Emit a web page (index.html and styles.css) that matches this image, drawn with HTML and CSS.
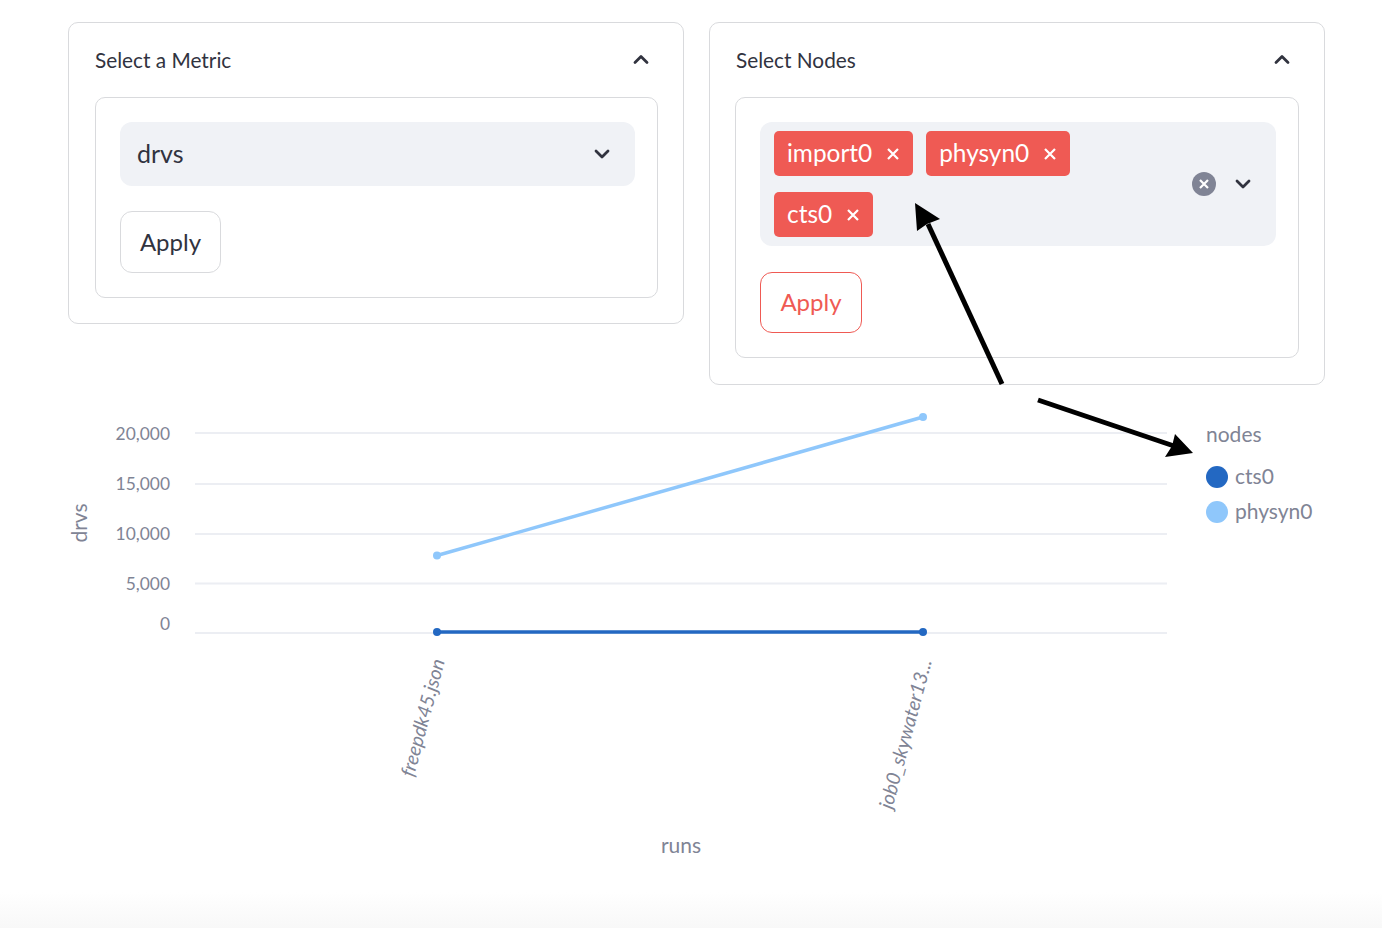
FILE: index.html
```html
<!DOCTYPE html>
<html lang="en">
<head>
<meta charset="utf-8">
<title>Metrics</title>
<link rel="stylesheet" href="styles.css">
</head>
<body>
<main class="page">
  <section class="panels">
    <div class="panel">
      <header class="panel-head">
        <span class="panel-title">Select a Metric</span>
        <svg class="chev" viewBox="0 0 18 18"><path d="M3 12.5 9 6.5l6 6"/></svg>
      </header>
      <div class="form">
        <div class="select">
          <span class="value">drvs</span>
          <svg class="chev" viewBox="0 0 18 18"><path d="M3 6 9 12l6-6"/></svg>
        </div>
        <button class="apply">Apply</button>
      </div>
    </div>
    <div class="panel nodes">
      <header class="panel-head">
        <span class="panel-title">Select Nodes</span>
        <svg class="chev" viewBox="0 0 18 18"><path d="M3 12.5 9 6.5l6 6"/></svg>
      </header>
      <div class="form">
        <div class="select multi">
          <div class="tags">
            <span class="tag">import0<svg class="tag-x" viewBox="0 0 14 14"><path d="M2 2l10 10M12 2 2 12"/></svg></span>
            <span class="tag">physyn0<svg class="tag-x" viewBox="0 0 14 14"><path d="M2 2l10 10M12 2 2 12"/></svg></span>
            <span class="tag">cts0<svg class="tag-x" viewBox="0 0 14 14"><path d="M2 2l10 10M12 2 2 12"/></svg></span>
          </div>
          <svg class="clear" viewBox="0 0 24 24"><circle cx="12" cy="12" r="12"/><path d="M8 8l8 8M16 8l-8 8"/></svg>
          <svg class="chev" viewBox="0 0 18 18"><path d="M3 6 9 12l6-6"/></svg>
        </div>
        <button class="apply active">Apply</button>
      </div>
    </div>
  </section>

  <svg class="chart" viewBox="0 385 1382 543" width="1382" height="543">
    <g class="grid">
      <line x1="195" x2="1167" y1="433" y2="433"/>
      <line x1="195" x2="1167" y1="484" y2="484"/>
      <line x1="195" x2="1167" y1="534" y2="534"/>
      <line x1="195" x2="1167" y1="583.5" y2="583.5"/>
      <line x1="195" x2="1167" y1="633" y2="633"/>
    </g>
    <g class="ticks">
      <text x="170" y="440">20,000</text>
      <text x="170" y="490">15,000</text>
      <text x="170" y="540">10,000</text>
      <text x="170" y="590">5,000</text>
      <text x="170" y="630">0</text>
    </g>
    <text class="axis" transform="translate(87 523) rotate(-90)">drvs</text>
    <text class="axis" x="681" y="853">runs</text>
    <line class="series light" x1="437" y1="555.5" x2="923" y2="417"/>
    <circle class="dot-light" cx="437" cy="555.5" r="4"/>
    <circle class="dot-light" cx="923" cy="417" r="4"/>
    <line class="series dark" x1="437" y1="632" x2="923" y2="632"/>
    <circle class="dot-dark" cx="437" cy="632" r="4"/>
    <circle class="dot-dark" cx="923" cy="632" r="4"/>
    <text class="xlabel" transform="translate(445 661) rotate(-75)">freepdk45.json</text>
    <text class="xlabel" transform="translate(932 661) rotate(-75)">job0_skywater13...</text>
    <text class="legend-title" x="1206" y="442">nodes</text>
    <circle class="dot-dark" cx="1217" cy="477" r="11"/>
    <text class="legend-item" x="1235" y="484">cts0</text>
    <circle class="dot-light" cx="1217" cy="512" r="11"/>
    <text class="legend-item" x="1235" y="519">physyn0</text>
  </svg>

  <div class="fade"></div>

  <svg class="arrows" viewBox="0 0 1382 928">
    <path class="shaft" d="M1002 384 928 224"/>
    <path class="head" d="M915 203 940 219 927 224 917 231Z"/>
    <path class="shaft" d="M1038 400 1174 446"/>
    <path class="head" d="M1193 453 1175 434 1172 446 1165 457Z"/>
  </svg>
</main>
</body>
</html>
```
FILE: styles.css
```css
* { box-sizing: border-box; }
html, body { margin: 0; padding: 0; background: #fff; }
body {
  width: 1382px;
  height: 928px;
  overflow: hidden;
  font-family: "Lato", "Noto Sans", sans-serif;
  color: #31333f;
}
.page { position: relative; width: 1382px; height: 928px; overflow: hidden; }
.panels {
  display: grid;
  grid-template-columns: 616px 616px;
  column-gap: 25px;
  align-items: start;
  padding: 22px 0 0 68px;
  height: 385px;
}
.panel {
  border: 1px solid #d9dadd;
  border-radius: 10px;
  padding: 0 25px 25px 26px;
}
.panel.nodes { padding: 0 25px 26px 25px; }
.panel-head {
  display: flex;
  align-items: center;
  justify-content: space-between;
  height: 74px;
  padding: 0 8px 2px 0;
}
.nodes .panel-head { padding-left: 1px; }
.panel-title { font-size: 20.8px; }
.chev { width: 18px; height: 18px; flex: none; }
.chev path { fill: none; stroke: #31333f; stroke-width: 2.8; stroke-linecap: round; stroke-linejoin: round; }
.form {
  border: 1px solid #d9dadd;
  border-radius: 10px;
  padding: 24px 22px 24px 24px;
  display: flex;
  flex-direction: column;
  align-items: flex-start;
  gap: 25px;
}
.select {
  width: 100%;
  min-height: 64px;
  background: #f0f2f6;
  border-radius: 12px;
  display: flex;
  align-items: center;
  padding: 0 24px 0 17px;
  font-size: 25px;
}
.value { flex: 1; padding-bottom: 2px; }
.multi { padding: 9px 24px 9px 14px; }
.tags { flex: 1; display: flex; flex-wrap: wrap; gap: 16px 13px; padding-right: 100px; }
.tag {
  display: inline-flex;
  align-items: center;
  height: 45px;
  padding: 0 13px 1px;
  border-radius: 5px;
  background: #ef5a54;
  color: #fff;
  font-size: 24.4px;
  line-height: 1;
  gap: 14px;
}
.tag-x { width: 14px; height: 14px; margin-top: 2px; }
.tag-x path { fill: none; stroke: #fff; stroke-width: 2.2; }
.clear { width: 24px; height: 24px; margin-right: 18px; flex: none; }
.clear circle { fill: #808495; }
.clear path { stroke: #fff; stroke-width: 2.2; fill: none; }
.apply {
  height: 62px;
  width: 101px;
  background: #fff;
  border: 1px solid #d9dadd;
  border-radius: 12px;
  font: inherit;
  font-size: 24px;
  color: #31333f;
  padding: 0 0 2px;
}
.apply.active { border-color: #ef5a54; color: #ef5a54; width: 102px; height: 61px; margin-top: 1px; }
.chart { display: block; }
.grid line { stroke: #eceef3; stroke-width: 2; }
.ticks text { font-size: 17.4px; fill: #808495; text-anchor: end; }
.axis { font-size: 21px; fill: #808495; text-anchor: middle; }
.xlabel { font-size: 19.5px; font-style: italic; fill: #808495; text-anchor: end; }
.legend-title, .legend-item { font-size: 21px; fill: #808495; }
.series { stroke-width: 3.5; }
.light { stroke: #8fc7fb; }
.dark { stroke: #2368c2; }
.dot-light { fill: #8fc7fb; }
.dot-dark { fill: #2368c2; }
.fade {
  position: absolute;
  left: 0; right: 0; bottom: 0;
  height: 36px;
  background: linear-gradient(to bottom, rgba(248,248,248,0), #f8f8f8);
}
.arrows { position: absolute; inset: 0; width: 1382px; height: 928px; pointer-events: none; }
.shaft { stroke: #000; stroke-width: 5; fill: none; }
.head { fill: #000; }
```
